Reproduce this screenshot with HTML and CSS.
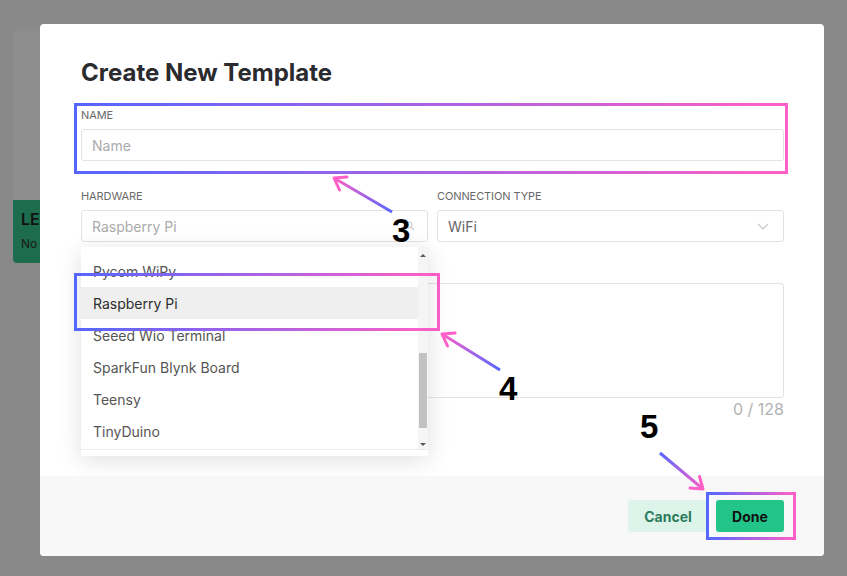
FILE: index.html
```html
<!DOCTYPE html>
<html>
<head>
<meta charset="utf-8">
<title>Create New Template</title>
<link rel="stylesheet" href="styles.css">
</head>
<body>
<div class="bg-card">
  <div class="bg-card-top"></div>
  <div class="bg-card-green">
    <div class="bg-card-title">LED</div>
    <div class="bg-card-sub">No device</div>
  </div>
</div>

<div class="modal">
  <div class="modal-body">
    <h1 class="title">Create New Template</h1>

    <div class="field field-name">
      <div class="label">Name</div>
      <div class="input"><span class="placeholder">Name</span></div>
    </div>

    <div class="row">
      <div class="field hw-field">
        <div class="label">Hardware</div>
        <div class="input">
          <span class="placeholder">Raspberry Pi</span>
          <svg class="search-icon" width="10" height="10" viewBox="0 0 10 10"><circle cx="4" cy="4" r="3" fill="none" stroke="#c8c8c8" stroke-width="1.2"/><path d="M6.3 6.3 L9 9" stroke="#c8c8c8" stroke-width="1.2"/></svg>
        </div>
        <div class="dropdown">
          <div class="dd-list">
            <div class="dd-item">Pycom WiPy</div>
            <div class="dd-item active">Raspberry Pi</div>
            <div class="dd-item">Seeed Wio Terminal</div>
            <div class="dd-item">SparkFun Blynk Board</div>
            <div class="dd-item">Teensy</div>
            <div class="dd-item">TinyDuino</div>
          </div>
          <div class="dd-scroll">
            <div class="sb-up"></div>
            <div class="sb-track"><div class="sb-thumb"></div></div>
            <div class="sb-down"></div>
          </div>
          <div class="dd-foot"></div>
        </div>
      </div>
      <div class="field">
        <div class="label">Connection Type</div>
        <div class="input">
          <span class="value">WiFi</span>
          <svg class="chevron" width="12" height="7" viewBox="0 0 12 7"><path d="M1 1 L6 6 L11 1" fill="none" stroke="#c4c4c4" stroke-width="1.1"/></svg>
        </div>
      </div>
    </div>

    <div class="field field-desc">
      <div class="textarea"></div>
      <div class="counter">0 / 128</div>
    </div>
  </div>
  <div class="modal-footer">
    <button class="btn btn-cancel">Cancel</button>
    <button class="btn btn-done">Done</button>
  </div>
</div>

<div class="mark mark-3"></div>
<div class="mark mark-4"></div>
<div class="mark mark-5"></div>

<svg class="arrows" width="847" height="576" viewBox="0 0 847 576">
  <defs>
    <linearGradient id="g3" gradientUnits="userSpaceOnUse" x1="392" y1="212" x2="334" y2="178">
      <stop offset="0" stop-color="#5566ff"/>
      <stop offset="1" stop-color="#ff5fc6"/>
    </linearGradient>
    <linearGradient id="g4" gradientUnits="userSpaceOnUse" x1="500" y1="370" x2="442" y2="334">
      <stop offset="0" stop-color="#5566ff"/>
      <stop offset="1" stop-color="#ff5fc6"/>
    </linearGradient>
    <linearGradient id="g5" gradientUnits="userSpaceOnUse" x1="660" y1="453" x2="703" y2="489">
      <stop offset="0" stop-color="#5566ff"/>
      <stop offset="1" stop-color="#ff5fc6"/>
    </linearGradient>
  </defs>
  <g fill="none" stroke-width="3" stroke-linejoin="round">
    <path d="M392 212 L334 178" stroke="url(#g3)"/>
    <path d="M347 177 L334 178 L339.5 190" stroke="#ff5fc6" stroke-linecap="round"/>
    <path d="M500 370 L442 334" stroke="url(#g4)"/>
    <path d="M455 333 L442 334 L447.5 346" stroke="#ff5fc6" stroke-linecap="round"/>
    <path d="M660 453 L703 489" stroke="url(#g5)"/>
    <path d="M690 488 L703 489 L699.5 476.5" stroke="#ff5fc6" stroke-linecap="round"/>
  </g>
  <g class="num">
    <text x="392" y="242">3</text>
    <text x="499" y="400">4</text>
    <text x="640" y="438">5</text>
  </g>
</svg>
</body>
</html>
```

FILE: styles.css
```css
* { box-sizing: border-box; }

html, body {
  margin: 0;
  padding: 0;
}

body {
  width: 847px;
  height: 576px;
  overflow: hidden;
  position: relative;
  background: #898989;
  font-family: "Inter", "Liberation Sans", sans-serif;
}

/* background card peeking out behind the modal */
.bg-card {
  position: absolute;
  left: 13px;
  top: 29px;
  width: 120px;
  height: 234px;
  border-radius: 4px;
  overflow: hidden;
  display: flex;
  flex-direction: column;
}
.bg-card-top {
  flex: 1;
  background: #8d8d8d;
}
.bg-card-green {
  height: 63px;
  background: #1d6c4d;
  padding: 9px 0 0 8px;
  color: #111;
}
.bg-card-title {
  font-weight: 600;
  font-size: 16px;
  line-height: 20px;
}
.bg-card-sub {
  font-size: 12px;
  line-height: 16px;
  margin-top: 7px;
  color: #1a1a1a;
}

/* modal */
.modal {
  position: absolute;
  left: 40px;
  top: 24px;
  width: 784px;
  height: 532px;
  background: #fff;
  border-radius: 4px;
  display: flex;
  flex-direction: column;
  overflow: hidden;
}
.modal-body {
  flex: 1;
  padding: 34px 40px 0 41px;
}
.title {
  margin: 0;
  font-size: 24px;
  line-height: 30px;
  font-weight: 700;
  color: #2a2a2f;
}
.field-name { margin-top: 20px; }

.label {
  font-size: 11px;
  line-height: 14px;
  text-transform: uppercase;
  color: #6a6a6a;
  margin-bottom: 7px;
  letter-spacing: -0.1px;
}
.input {
  height: 32px;
  border: 1px solid #e3e3e3;
  border-radius: 3px;
  padding: 0 10px;
  display: flex;
  align-items: center;
  justify-content: space-between;
  font-size: 14px;
}
.placeholder { color: #ababab; }
.value { color: #666; }
.search-icon { margin-right: 2px; }
.chevron { margin-right: 4px; }

.row {
  margin-top: 28px;
  display: grid;
  grid-template-columns: 347px 347px;
  column-gap: 9px;
}
.hw-field { position: relative; }

/* dropdown */
.dropdown {
  position: absolute;
  left: 0;
  right: 0;
  top: calc(100% + 5px);
  height: 209px;
  background: #fff;
  box-shadow: 0 4px 22px rgba(0, 0, 0, 0.13);
  z-index: 5;
  display: grid;
  grid-template-columns: 1fr 10px;
  grid-template-rows: 202px 7px;
}
.dd-list {
  padding-top: 8px;
  overflow: hidden;
}
.dd-item {
  height: 32px;
  line-height: 33px;
  padding-left: 12px;
  font-size: 14px;
  color: #555;
}
.dd-item.active {
  background: #efefef;
  color: #2e2e2e;
}
.dd-scroll {
  background: #f5f5f5;
  display: flex;
  flex-direction: column;
  align-items: center;
}
.sb-up, .sb-down {
  width: 0;
  height: 0;
  border-left: 3px solid transparent;
  border-right: 3px solid transparent;
}
.sb-up {
  margin-top: 7px;
  border-bottom: 3px solid #5a5a5a;
}
.sb-down {
  margin-bottom: 3px;
  border-top: 3px solid #5a5a5a;
}
.sb-track {
  flex: 1;
  width: 100%;
  position: relative;
}
.sb-thumb {
  position: absolute;
  left: 1px;
  right: 1px;
  top: 96px;
  height: 75px;
  background: #c2c2c2;
}
.dd-foot {
  grid-column: 1 / 3;
  border-top: 1px solid #ececec;
  background: #fff;
}

/* description */
.field-desc { margin-top: 41px; }
.textarea {
  height: 115px;
  border: 1px solid #e3e3e3;
  border-radius: 3px;
}
.counter {
  margin-top: 2px;
  text-align: right;
  font-size: 16px;
  line-height: 19px;
  color: #b2b2b2;
}

/* footer */
.modal-footer {
  height: 80px;
  background: #f8f8f8;
  display: flex;
  justify-content: flex-end;
  align-items: center;
  gap: 8px;
  padding-right: 40px;
}
.btn {
  height: 32px;
  border: none;
  border-radius: 3px;
  font-family: "Inter", "Liberation Sans", sans-serif;
  font-size: 14px;
  font-weight: 700;
  padding: 0;
}
.btn-cancel {
  width: 80px;
  background: #dcf4ea;
  color: #2d7c5c;
}
.btn-done {
  width: 68px;
  background: #22c48a;
  color: #111;
}

/* annotations */
.mark {
  position: absolute;
  border: 3px solid;
  border-image: linear-gradient(90deg, #5566ff, #ff5fc6) 1;
  z-index: 10;
}
.mark-3 { left: 74px; top: 103px; width: 714px; height: 71px; }
.mark-4 { left: 74px; top: 273px; width: 366px; height: 58px; }
.mark-5 { left: 706px; top: 492px; width: 90px; height: 48px; }

.arrows {
  position: absolute;
  left: 0;
  top: 0;
  z-index: 11;
}
.num text {
  font-family: "Liberation Sans", Arial, sans-serif;
  font-weight: 700;
  font-size: 33px;
  fill: #000;
}
```
